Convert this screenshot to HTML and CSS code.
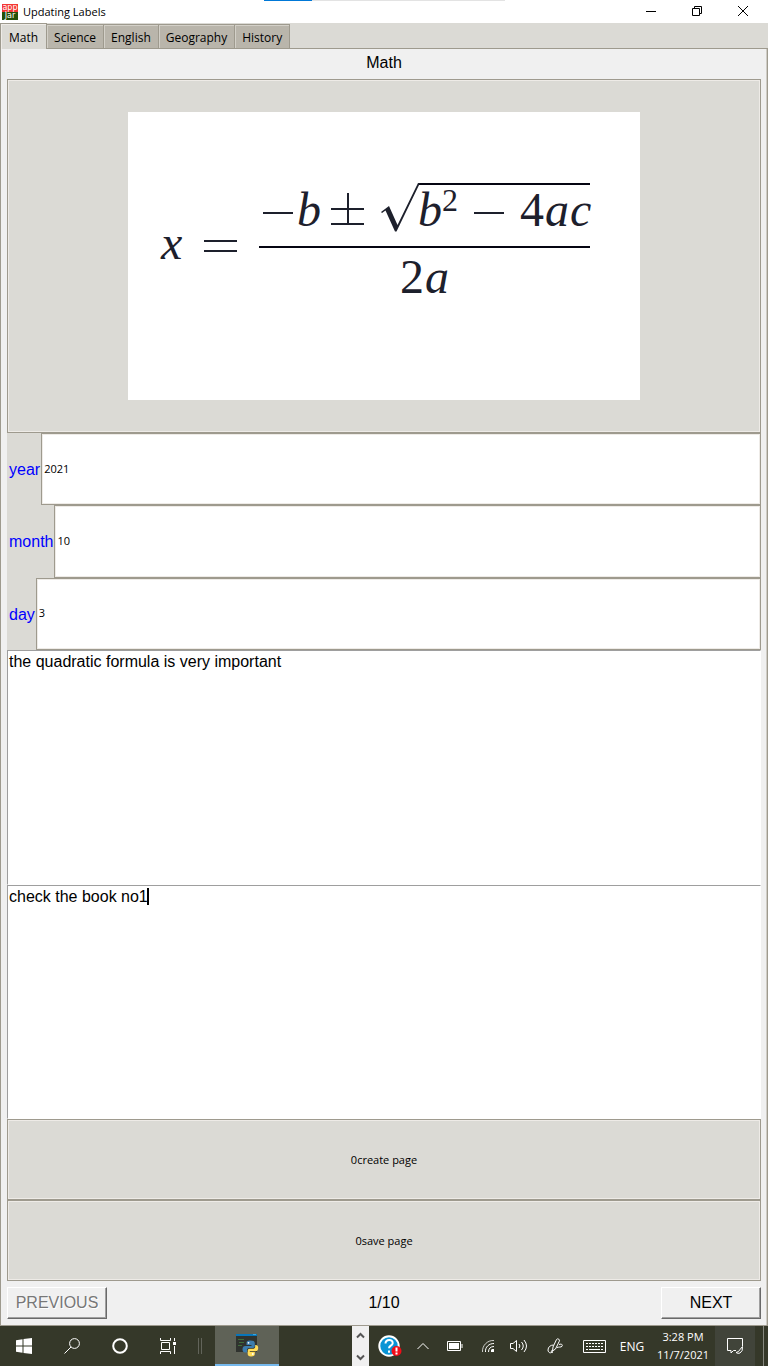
FILE: index.html
```html
<!DOCTYPE html>
<html lang="en">
<head>
<meta charset="utf-8">
<title>Updating Labels</title>
<link rel="stylesheet" href="styles.css">
</head>
<body>
<header class="titlebar">
  <div class="progress"></div>
  <span class="logo"><span class="logo-app">app</span><span class="logo-jar">Jar</span></span>
  <h1 class="title">Updating Labels</h1>
  <button class="window-button" aria-label="Minimize"><svg width="12" height="12" viewBox="0 0 12 12"><path d="M1 6.500h10"/></svg></button>
  <button class="window-button" aria-label="Restore"><svg width="12" height="12" viewBox="0 0 12 12"><path d="M1.500 3.500h7v7h-7zM3.500 3.500v-2h7v7h-2"/></svg></button>
  <button class="window-button" aria-label="Close"><svg width="12" height="12" viewBox="0 0 12 12"><path d="M1 1l10 10M11 1L1 11"/></svg></button>
</header>
<nav class="tabs" role="tablist">
  <button class="tab tab-active" role="tab" aria-selected="true">Math</button>
  <button class="tab" role="tab">Science</button>
  <button class="tab" role="tab">English</button>
  <button class="tab" role="tab">Geography</button>
  <button class="tab" role="tab">History</button>
</nav>
<main class="page">
  <h2 class="heading">Math</h2>
  <button class="bevel formula-button" aria-label="Quadratic formula">
    <svg class="formula" viewBox="0 0 512 288">
      <g class="formula-text">
        <text class="var" x="33" y="147">x</text>
        <text class="var" x="169" y="114">b</text>
        <text class="var" x="290" y="114">b</text>
        <text class="exponent" x="314" y="99">2</text>
        <text x="392" y="114">4</text>
        <text class="var" x="417" y="114">a</text>
        <text class="var" x="442" y="114">c</text>
        <text x="272" y="181">2</text>
        <text class="var" x="297" y="181">a</text>
      </g>
      <path class="formula-line" d="M76 129h33M76 139h33M135 101h30M203 97h33M203 112h33M220 81v31M346 101h30"/>
      <path class="formula-bar" d="M131 135h331M290 72h172"/>
      <path class="root" d="M253 100L261 94 269.500 113 290 71h2L268.500 119.500H267L257.500 98.500 254 101z"/>
    </svg>
  </button>
  <div class="fields">
    <div class="field"><label for="year">year</label><input id="year" class="bevel" value="2021"></div>
    <div class="field"><label for="month">month</label><input id="month" class="bevel" value="10"></div>
    <div class="field"><label for="day">day</label><input id="day" class="bevel" value="3"></div>
  </div>
  <div class="note"><textarea aria-label="Lesson notes">the quadratic formula is very important</textarea></div>
  <div class="note"><textarea aria-label="Reminder">check the book no1</textarea><span class="caret"></span></div>
  <button class="bevel action">0create page</button>
  <button class="bevel action">0save page</button>
  <div class="pager">
    <button class="pager-button" disabled>PREVIOUS</button>
    <span>1/10</span>
    <button class="pager-button">NEXT</button>
  </div>
</main>
<footer class="taskbar">
  <button class="task" aria-label="Start"><svg width="16" height="16" viewBox="0 0 16 16"><path class="solid" d="M0 2.200L6.500 1.300V7.500H0zM7.500 1.100L16 0v7.500H7.500zM0 8.500h6.500v6.200L0 13.800zM7.500 8.500H16V16l-8.500-1.100z"/></svg></button>
  <button class="task" aria-label="Search"><svg width="16" height="16" viewBox="0 0 16 16"><circle cx="10.500" cy="5.500" r="4.900"/><path d="M7 9L.5 15.500"/></svg></button>
  <button class="task" aria-label="Cortana"><svg width="16" height="16" viewBox="0 0 16 16"><circle class="thick" cx="8" cy="8" r="6.800"/></svg></button>
  <button class="task" aria-label="Task view"><svg width="16" height="16" viewBox="0 0 16 16"><path d="M.5 0v2.500h10V0M.5 16v-2.500h10V16M1.500 4.500h8v7h-8zM14.500 0v3M14.500 8v8"/><path class="solid" d="M13 4h3v3h-3z"/></svg></button>
  <span class="grip"></span>
  <button class="task task-current" aria-label="Python application">
    <svg width="24" height="24" viewBox="0 0 24 24">
      <path fill="#30332f" stroke="none" d="M1 1h21v18H1z"/>
      <path fill="#0875b9" stroke="none" d="M1 1h21v2H1z"/><path fill="#3ba4db" stroke="none" d="M18 1h3v1h-3z"/>
      <path stroke="#3f6e3b" d="M3 6.500h6M4 9.500h5M3 12.500h4"/>
      <path fill="#3d7dae" stroke="none" d="M15 7.500c-3 0-3.500 1-3.500 2.500v2h5v1h-6c-2 0-3 1.200-3 3.300 0 2.100 1 3.200 2.500 3.200H12v-2.300c0-1.500 1-2.200 2.500-2.200H18c1 0 1.800-.8 1.800-2v-3c0-1.700-1.500-2.500-4.800-2.500z"/>
      <path fill="#ffdc59" stroke="none" d="M16 23.500c3 0 3.800-1 3.800-2.500v-2h-5v-.8h6c1.600 0 2.400-1.200 2.400-3.200 0-2.200-1-3-2.400-3h-.6v1.500c0 1.500-1 2.300-2.500 2.300h-3c-1.300 0-2 .8-2 2V21c0 1.500 1 2.500 3.300 2.500z"/>
      <circle cx="13.500" cy="9.800" r=".9" fill="#fff" stroke="none"/><circle cx="17.800" cy="21" r=".9" fill="#fff" stroke="none"/>
    </svg>
  </button>
  <span class="spacer"></span>
  <span class="scroller">
    <button aria-label="Scroll up"><svg width="9" height="7" viewBox="0 0 9 7"><path d="M1 5.500L4.500 2 8 5.500"/></svg></button>
    <button aria-label="Scroll down"><svg width="9" height="7" viewBox="0 0 9 7"><path d="M1 1.500L4.500 5 8 1.500"/></svg></button>
  </span>
  <button class="tray help" aria-label="Help"><svg width="24" height="24" viewBox="0 0 24 24"><circle cx="11" cy="12" r="9.700" fill="#0994d5" stroke="#fff" stroke-width="2"/><path class="question" d="M7.500 9.500c.2-5 7.500-4.500 7.200-.3-.2 2.500-3.700 2.500-3.700 5M11 16.500v2.200"/><circle cx="18.500" cy="17" r="5" fill="#f20d18" stroke="none"/><path stroke="#fff" stroke-width="2" d="M18.500 13.500v4M18.500 18.500v2"/></svg></button>
  <button class="tray chevron" aria-label="Show hidden icons"><svg width="14" height="8" viewBox="0 0 14 8"><path d="M1.500 7L7 1.500 12.500 7"/></svg></button>
  <button class="tray" aria-label="Battery"><svg width="16" height="10" viewBox="0 0 16 10"><path d="M.5.500h13v9H.5zM15 3v4"/><path class="solid" d="M2 2h10v6H2z"/></svg></button>
  <button class="tray wifi" aria-label="Network"><svg width="14" height="14" viewBox="0 0 14 14"><path opacity=".75" d="M1.500 13C1 6.500 6.500 1 13 1.500"/><path d="M4.500 13C4 8 8 4.500 13 4.500M7.500 13c0-3.500 2-5.500 5.500-5.500"/><path class="solid" d="M10 11l1-1h2v3h-3z"/></svg></button>
  <button class="tray volume" aria-label="Volume"><svg width="17" height="14" viewBox="0 0 17 14"><path d="M.5 4.500H3L6.500 1.500v11L3 9.500H.5zM9 5q1.800 2 0 4M11.500 3q3.500 4 0 8M14 1q5 6 0 12"/></svg></button>
  <button class="tray" aria-label="Pen workspace"><svg class="pen" width="16" height="16" viewBox="0 0 16 16"><path d="M5.500 13L6 9 9.500 1.500q1-1.200 2.300-.3 1 .8.500 2L8.500 11zM6.500 7C3.500 7 1 9 1 12c0 3 3.500 4 4.500 1M4.500 12.500c-.5 2 .5 3 1.500 1.500M12 6.500c2.500-1 4 .2 3 1.800-1 1.200-3.500.5-5 1.200"/></svg></button>
  <button class="tray narrow" aria-label="Touch keyboard"><svg width="23" height="13" viewBox="0 0 23 13"><path d="M.5.500h22v12H.5z"/><path stroke-dasharray="2 1" d="M3 3.500h17M3 6.500h17"/><path d="M3 9.500h2M6 9.500h11M18 9.500h2"/></svg></button>
  <button class="tray narrow language">ENG</button>
  <button class="clock"><span>3:28 PM</span><span>11/7/2021</span></button>
  <button class="tray notices" aria-label="Notifications"><svg width="18" height="18" viewBox="0 0 18 18"><path d="M10 13.500H7.500L5 16v-2.500H1.500V1.500h15V9"/><path d="M16.500 9.500q.5 5-2.500 6.500-2 1-4-.5 3-.5 4-3z"/></svg></button>
  <span class="desktop-edge"></span>
</footer>
</body>
</html>
```
FILE: styles.css
```css
* { box-sizing: border-box; }
body {
  margin: 0;
  min-height: 100vh;
  display: flex;
  flex-direction: column;
  background: #dbdad5;
  color: #000;
  font-family: "Open Sans", sans-serif;
  font-size: 11px;
}
button, input, textarea {
  margin: 0;
  padding: 0;
  border: 0;
  border-radius: 0;
  background: none;
  color: inherit;
  font: inherit;
}
svg { display: block; fill: none; stroke: currentColor; flex: none; }

.titlebar {
  position: relative;
  display: flex;
  align-items: center;
  height: 23px;
  background: #fff;
}
.progress {
  position: absolute;
  top: 0;
  left: 264px;
  width: 241px;
  height: 1px;
  background: linear-gradient(90deg, #0078d7 48px, #e3e3e3 48px);
}
.logo {
  display: flex;
  flex-direction: column;
  width: 16px;
  height: 16px;
  margin: 0 5px 0 2px;
  color: #fff;
  font: 8px/8px "DejaVu Sans", sans-serif;
  text-align: center;
}
.logo-app { background: #f43632; }
.logo-jar { background: #245009; }
.title {
  flex: 1;
  margin: 0;
  font-size: 11px;
  font-weight: 400;
}
.window-button {
  display: grid;
  place-items: center;
  width: 46px;
  height: 21px;
  align-self: flex-start;
}
.window-button:last-child { margin-right: 2px; }

.tabs {
  display: flex;
  align-items: flex-end;
  height: 26px;
  border-bottom: 1px solid #9e9a8e;
}
.tab {
  height: 24px;
  padding: 1px 7px 0;
  border: 1px solid #9e9a8e;
  border-width: 1px 1px 0 0;
  box-shadow: inset 1px 1px #d3d0c8;
  background: #b9b5ab;
  font-size: 12px;
}
.tab-active {
  height: 26px;
  padding: 1px 8px 0;
  margin-bottom: -1px;
  border-left-width: 1px;
  background: #dbdad5;
  box-shadow: inset 1px 1px #eeebe7;
}

.page {
  flex: 1;
  display: flex;
  flex-direction: column;
  padding: 0 6px;
  border: 1px solid #9e9a8e;
  border-top: 0;
  box-shadow: inset -1px 0 #cfccc5;
  background: #f0f0f0;
  font-family: "Liberation Sans", Arial, sans-serif;
  font-size: 16px;
}
.heading {
  margin: 0;
  padding-top: 4px;
  height: 30px;
  font-size: 16px;
  font-weight: 400;
  line-height: 20px;
  text-align: center;
}
.bevel {
  border: 1px solid #9e9a8e;
  box-shadow: inset 0 0 0 1px #eeebe7;
  background: #dbdad5;
}
.formula-button {
  display: grid;
  place-items: center;
  height: 354px;
}
.formula {
  width: 512px;
  max-width: 90%;
  background: #fff;
  color: #1d202c;
}
.formula-text {
  fill: currentColor;
  stroke: none;
  font-family: "Liberation Serif", serif;
  font-size: 48px;
}
.var { font-style: italic; }
.exponent { font-size: 32px; }
.formula-line { stroke-width: 2; }
.formula-bar { stroke: #050512; stroke-width: 2; }
.root { fill: currentColor; stroke: none; }

.fields {
  display: grid;
  grid-template-rows: repeat(3, 1fr);
  height: 217px;
  background: #dbdad5;
}
.field { display: flex; }
.field label {
  display: flex;
  align-items: center;
  padding: 2px 1px 0 2px;
  color: #00f;
}
.field input {
  flex: 1;
  min-width: 0;
  padding: 0 2px 2px;
  background: #fff;
  font-family: "Open Sans", sans-serif;
  font-size: 11px;
}
.note {
  position: relative;
  flex: 1;
  display: flex;
  min-height: 120px;
}
.note textarea {
  flex: 1;
  padding: 1px;
  border: 1px solid #9e9e9e;
  border-right-color: #fff;
  border-bottom-color: #fff;
  background: #fff;
  line-height: 20px;
  resize: none;
}
.caret {
  position: absolute;
  top: 3px;
  left: 140px;
  width: 2px;
  height: 17px;
  background: #000;
}
.action {
  height: 81px;
  font-family: "Open Sans", sans-serif;
  font-size: 11px;
}
.pager {
  display: grid;
  grid-template-columns: 100px 1fr 100px;
  align-items: center;
  height: 44px;
  text-align: center;
}
.pager-button {
  height: 32px;
  border: 1px solid;
  border-color: #fff #696969 #696969 #fff;
  box-shadow: inset -1px -1px #a0a0a0;
  background: #f0f0f0;
}
.pager-button:disabled { color: #777; text-shadow: 1px 1px #fff; }

.taskbar {
  display: flex;
  height: 40px;
  background: #353829;
  color: #fff;
}
.taskbar button { display: grid; place-items: center; }
.solid { fill: currentColor; stroke: none; }
.thick { stroke-width: 2; }
.task { width: 48px; }
.grip {
  width: 4px;
  height: 16px;
  margin: 12px 13px 0 6px;
  border: 1px solid #62645a;
  border-width: 0 1px;
}
.task-current {
  width: 64px;
  border-bottom: 2px solid #76b9ed;
  background: #5f6257;
}
.spacer { flex: 1; }
.scroller {
  display: flex;
  flex-direction: column;
  justify-content: space-between;
  align-items: center;
  width: 17px;
  padding: 6px 0 5px;
  background: #f0f0f0;
  color: #555;
}
.scroller svg { stroke-width: 2; }
.tray { width: 40px; }
.help { width: 42px; }
.question { stroke: #fff; stroke-width: 2; }
.chevron { width: 24px; }
.wifi { width: 26px; }
.volume { width: 34px; }
.narrow { width: 38px; }
.language { font-size: 12px; }
.pen { stroke-width: 1; }
.clock {
  width: 64px;
  line-height: 18px;
}
.taskbar .clock { align-content: center; }
.notices { background: #41443a; }
.desktop-edge {
  width: 9px;
  margin-right: 4px;
  border-right: 1px solid #85877e;
}
```
